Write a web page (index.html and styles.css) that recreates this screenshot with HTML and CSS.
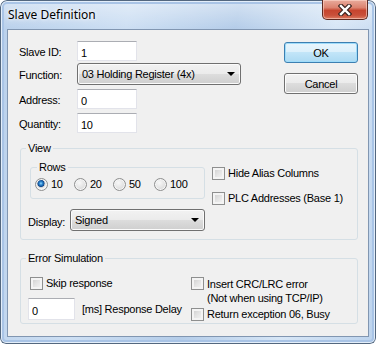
FILE: index.html
```html
<!DOCTYPE html>
<html>
<head>
    <title>Slave Definition</title>
    <link rel="stylesheet" href="styles.css">
</head>
<body>
    <div id="window">
        <div id="titleBar">
            <span id="title">Slave Definition</span>
            <div id="closeBtn">
                <svg width="14" height="12" viewBox="0 0 14 12">
                    <path d="M3 2 L11 10 M11 2 L3 10" stroke="#3b2420" stroke-width="4.6" stroke-linecap="square" fill="none"/>
                    <path d="M3 2 L11 10 M11 2 L3 10" stroke="#ffffff" stroke-width="2.4" stroke-linecap="square" fill="none"/>
                </svg>
            </div>
        </div>
        <div id="client">
            <div id="topDiv">
                <div id="fieldsDiv">
                    <div class="fieldRow"><label class="fieldLabel">Slave ID:</label><input class="edit shortEdit" value="1"></div>
                    <div class="fieldRow comboRow"><label class="fieldLabel">Function:</label><div class="combo functionCombo">03 Holding Register (4x)<span class="arrow"></span></div></div>
                    <div class="fieldRow"><label class="fieldLabel">Address:</label><input class="edit shortEdit" value="0"></div>
                    <div class="fieldRow"><label class="fieldLabel">Quantity:</label><input class="edit shortEdit" value="10"></div>
                </div>
                <div id="buttonDiv">
                    <button class="btn defaultBtn">OK</button>
                    <button class="btn">Cancel</button>
                </div>
            </div>
            <fieldset class="group" id="viewGroup">
                <legend>View</legend>
                <div id="viewBody">
                    <div id="viewLeft">
                        <fieldset class="group" id="rowsGroup">
                            <legend>Rows</legend>
                            <div id="radioDiv">
                                <label class="option"><span class="radio checked"></span>10</label>
                                <label class="option"><span class="radio"></span>20</label>
                                <label class="option"><span class="radio"></span>50</label>
                                <label class="option"><span class="radio"></span>100</label>
                            </div>
                        </fieldset>
                        <div id="displayRow">
                            <label class="displayLabel">Display:</label>
                            <div class="combo displayCombo">Signed<span class="arrow"></span></div>
                        </div>
                    </div>
                    <div id="viewRight">
                        <label class="option"><span class="check"></span>Hide Alias Columns</label>
                        <label class="option"><span class="check"></span>PLC Addresses (Base 1)</label>
                    </div>
                </div>
            </fieldset>
            <fieldset class="group" id="errorGroup">
                <legend>Error Simulation</legend>
                <div id="errorBody">
                    <div id="errorLeft">
                        <label class="option skipOption"><span class="check"></span>Skip response</label>
                        <div id="delayRow">
                            <input class="edit delayEdit" value="0">
                            <span class="delayText">[ms] Response Delay</span>
                        </div>
                    </div>
                    <div id="errorRight">
                        <label class="option twoLine"><span class="check"></span><span>Insert CRC/LRC error<br>(Not when using TCP/IP)</span></label>
                        <label class="option busyOption"><span class="check"></span>Return exception 06, Busy</label>
                    </div>
                </div>
            </fieldset>
        </div>
    </div>
</body>
</html>
```

FILE: styles.css
```css
*{
    box-sizing: border-box;
}

body{
    margin: 0px;
    background-color: #ffffff;
}

#window{
    display: flex;
    flex-direction: column;
    width: 376px;
    height: 344px;
    padding: 0px 7px 7px 7px;
    border-radius: 7px 7px 6px 6px;
    background:
        linear-gradient(to bottom, rgba(255,255,255,0.45), rgba(255,255,255,0) 28px),
        linear-gradient(100deg, #b9d0eb 0%, #cddff3 30%, #b5cde9 55%, #d7e6f6 78%, #bcd3ed 100%);
    box-shadow: inset 0 0 0 1px #53677f, inset 0 0 0 2px #e3eefa, inset 0 0 0 4px #a9c4e6;
    font-family: "Liberation Sans", Arial, sans-serif;
    font-size: 11px;
    letter-spacing: -0.25px;
    color: #000000;
}

#titleBar{
    display: flex;
    justify-content: space-between;
    align-items: flex-start;
    height: 29px;
}

#title{
    margin-top: 7px;
    margin-left: 1px;
    font-family: "Noto Sans", "Liberation Sans", sans-serif;
    font-size: 12px;
    line-height: 16px;
    letter-spacing: 0px;
    text-shadow: 0 0 6px #ffffff, 0 0 3px #ffffff;
}

#closeBtn{
    display: flex;
    justify-content: center;
    align-items: center;
    width: 46px;
    height: 20px;
    margin-right: 1px;
    border: 1px solid #5e2a22;
    border-top: none;
    border-radius: 0px 0px 5px 5px;
    background: linear-gradient(to bottom, #e9ab9c 0%, #dc8370 40%, #c6452f 55%, #c9503a 80%, #dc7b62 100%);
    box-shadow: inset 0 0 0 1px rgba(255,220,210,0.55);
}

#client{
    flex: 1;
    display: flex;
    flex-direction: column;
    padding: 11px 10px 0px 11px;
    background-color: #f0f0f0;
    border: 1px solid #8196b1;
}

#topDiv{
    display: flex;
    justify-content: space-between;
    align-items: flex-start;
}

#fieldsDiv{
    display: flex;
    flex-direction: column;
}

.fieldRow{
    display: flex;
    align-items: center;
    margin-bottom: 4px;
}

.fieldRow:first-child{
    margin-bottom: 2px;
}

.fieldRow:last-child{
    margin-bottom: 0px;
}

.fieldLabel{
    width: 58px;
    line-height: 13px;
    padding-top: 3px;
}

.edit{
    height: 20px;
    padding: 3px 3px 0px 3px;
    border: 1px solid #e2e3ea;
    border-top-color: #abadb3;
    background-color: #ffffff;
    font-family: "Liberation Sans", Arial, sans-serif;
    font-size: 11px;
    letter-spacing: -0.25px;
    color: #000000;
    outline: none;
}

.shortEdit{
    width: 60px;
}

.combo{
    display: flex;
    align-items: center;
    justify-content: space-between;
    height: 22px;
    padding: 0px 5px 0px 4px;
    border: 1px solid #707070;
    border-radius: 3px;
    background: linear-gradient(to bottom, #f2f2f2 0%, #ebebeb 50%, #dddddd 50%, #cfcfcf 100%);
    box-shadow: inset 0 0 0 1px #fbfbfb;
    line-height: 13px;
}

.functionCombo{
    width: 164px;
}

.arrow{
    width: 0px;
    height: 0px;
    border-left: 4px solid transparent;
    border-right: 4px solid transparent;
    border-top: 4px solid #000000;
}

#buttonDiv{
    display: flex;
    flex-direction: column;
    gap: 10px;
    margin-top: 1px;
}

.btn{
    width: 74px;
    height: 21px;
    padding: 0px;
    border: 1px solid #707070;
    border-radius: 3px;
    background: linear-gradient(to bottom, #f2f2f2 0%, #ebebeb 50%, #dddddd 50%, #cfcfcf 100%);
    box-shadow: inset 0 0 0 1px #fcfcfc;
    font-family: "Liberation Sans", Arial, sans-serif;
    font-size: 11px;
    letter-spacing: -0.25px;
    color: #000000;
}

.defaultBtn{
    border-color: #3c7fb1;
    background: linear-gradient(to bottom, #e8f5fc 0%, #dcf0fb 50%, #c2e5f8 50%, #acdaf3 100%);
    box-shadow: inset 0 0 0 1px #9fdcfa;
}

.group{
    margin: 0px;
    padding: 0px;
    border: 1px solid #d5dfe5;
    border-radius: 3px;
    min-inline-size: 0;
}

.group legend{
    padding: 0px 2px;
    margin-left: 5px;
    line-height: 13px;
}

#viewGroup{
    margin: 9px 0px 0px 1px;
}

#viewBody{
    display: flex;
    padding: 6px 8px 8px 7px;
}

#viewLeft{
    display: flex;
    flex-direction: column;
}

#rowsGroup{
    width: 175px;
    margin-left: 2px;
}

#rowsGroup legend{
    margin-left: 6px;
}

#radioDiv{
    display: grid;
    grid-template-columns: 39px 39px 41px auto;
    padding: 4px 0px 7px 4px;
}

.option{
    display: flex;
    align-items: flex-start;
    gap: 3px;
    line-height: 13px;
    white-space: nowrap;
}

.twoLine{
    line-height: 14px;
}

.radio{
    flex: none;
    width: 13px;
    height: 13px;
    border: 1px solid #8e8f8f;
    border-radius: 50%;
    background: radial-gradient(circle at 40% 35%, #f8f8f8 0%, #e6e6e6 45%, #cfcfcf 100%);
    box-shadow: inset 0 0 0 1px #f6f6f6;
}

.radio.checked{
    background: radial-gradient(circle at 45% 40%, #9ad8fb 0px, #2b87d0 1.6px, #14498c 3.3px, #c8c8c8 3.8px, #eeeeee 5px, #f6f6f6 6px);
}

.check{
    flex: none;
    width: 13px;
    height: 13px;
    border: 1px solid #8e8f8f;
    background: linear-gradient(135deg, #cbcbcb 0%, #e4e4e4 50%, #f7f7f7 100%);
    box-shadow: inset 0 0 0 2px #f4f4f4;
}

#displayRow{
    display: flex;
    align-items: center;
    margin-top: 10px;
}

.displayLabel{
    width: 42px;
    padding-top: 3px;
}

.displayCombo{
    width: 135px;
}

#viewRight{
    display: flex;
    flex-direction: column;
    gap: 12px;
    margin-left: 7px;
    padding-top: 6px;
}

#errorGroup{
    margin: 12px 0px 0px 1px;
}

#errorBody{
    display: grid;
    grid-template-columns: 163px auto;
    padding: 12px 0px 2px 7px;
}

#errorLeft{
    display: flex;
    flex-direction: column;
}

.skipOption{
    margin-left: 2px;
}

#delayRow{
    display: flex;
    align-items: center;
    margin-top: 8px;
}

.delayEdit{
    width: 47px;
    height: 22px;
}

.delayText{
    margin-left: 7px;
}

#errorRight{
    display: flex;
    flex-direction: column;
}

.busyOption{
    margin-top: 3px;
}
```
